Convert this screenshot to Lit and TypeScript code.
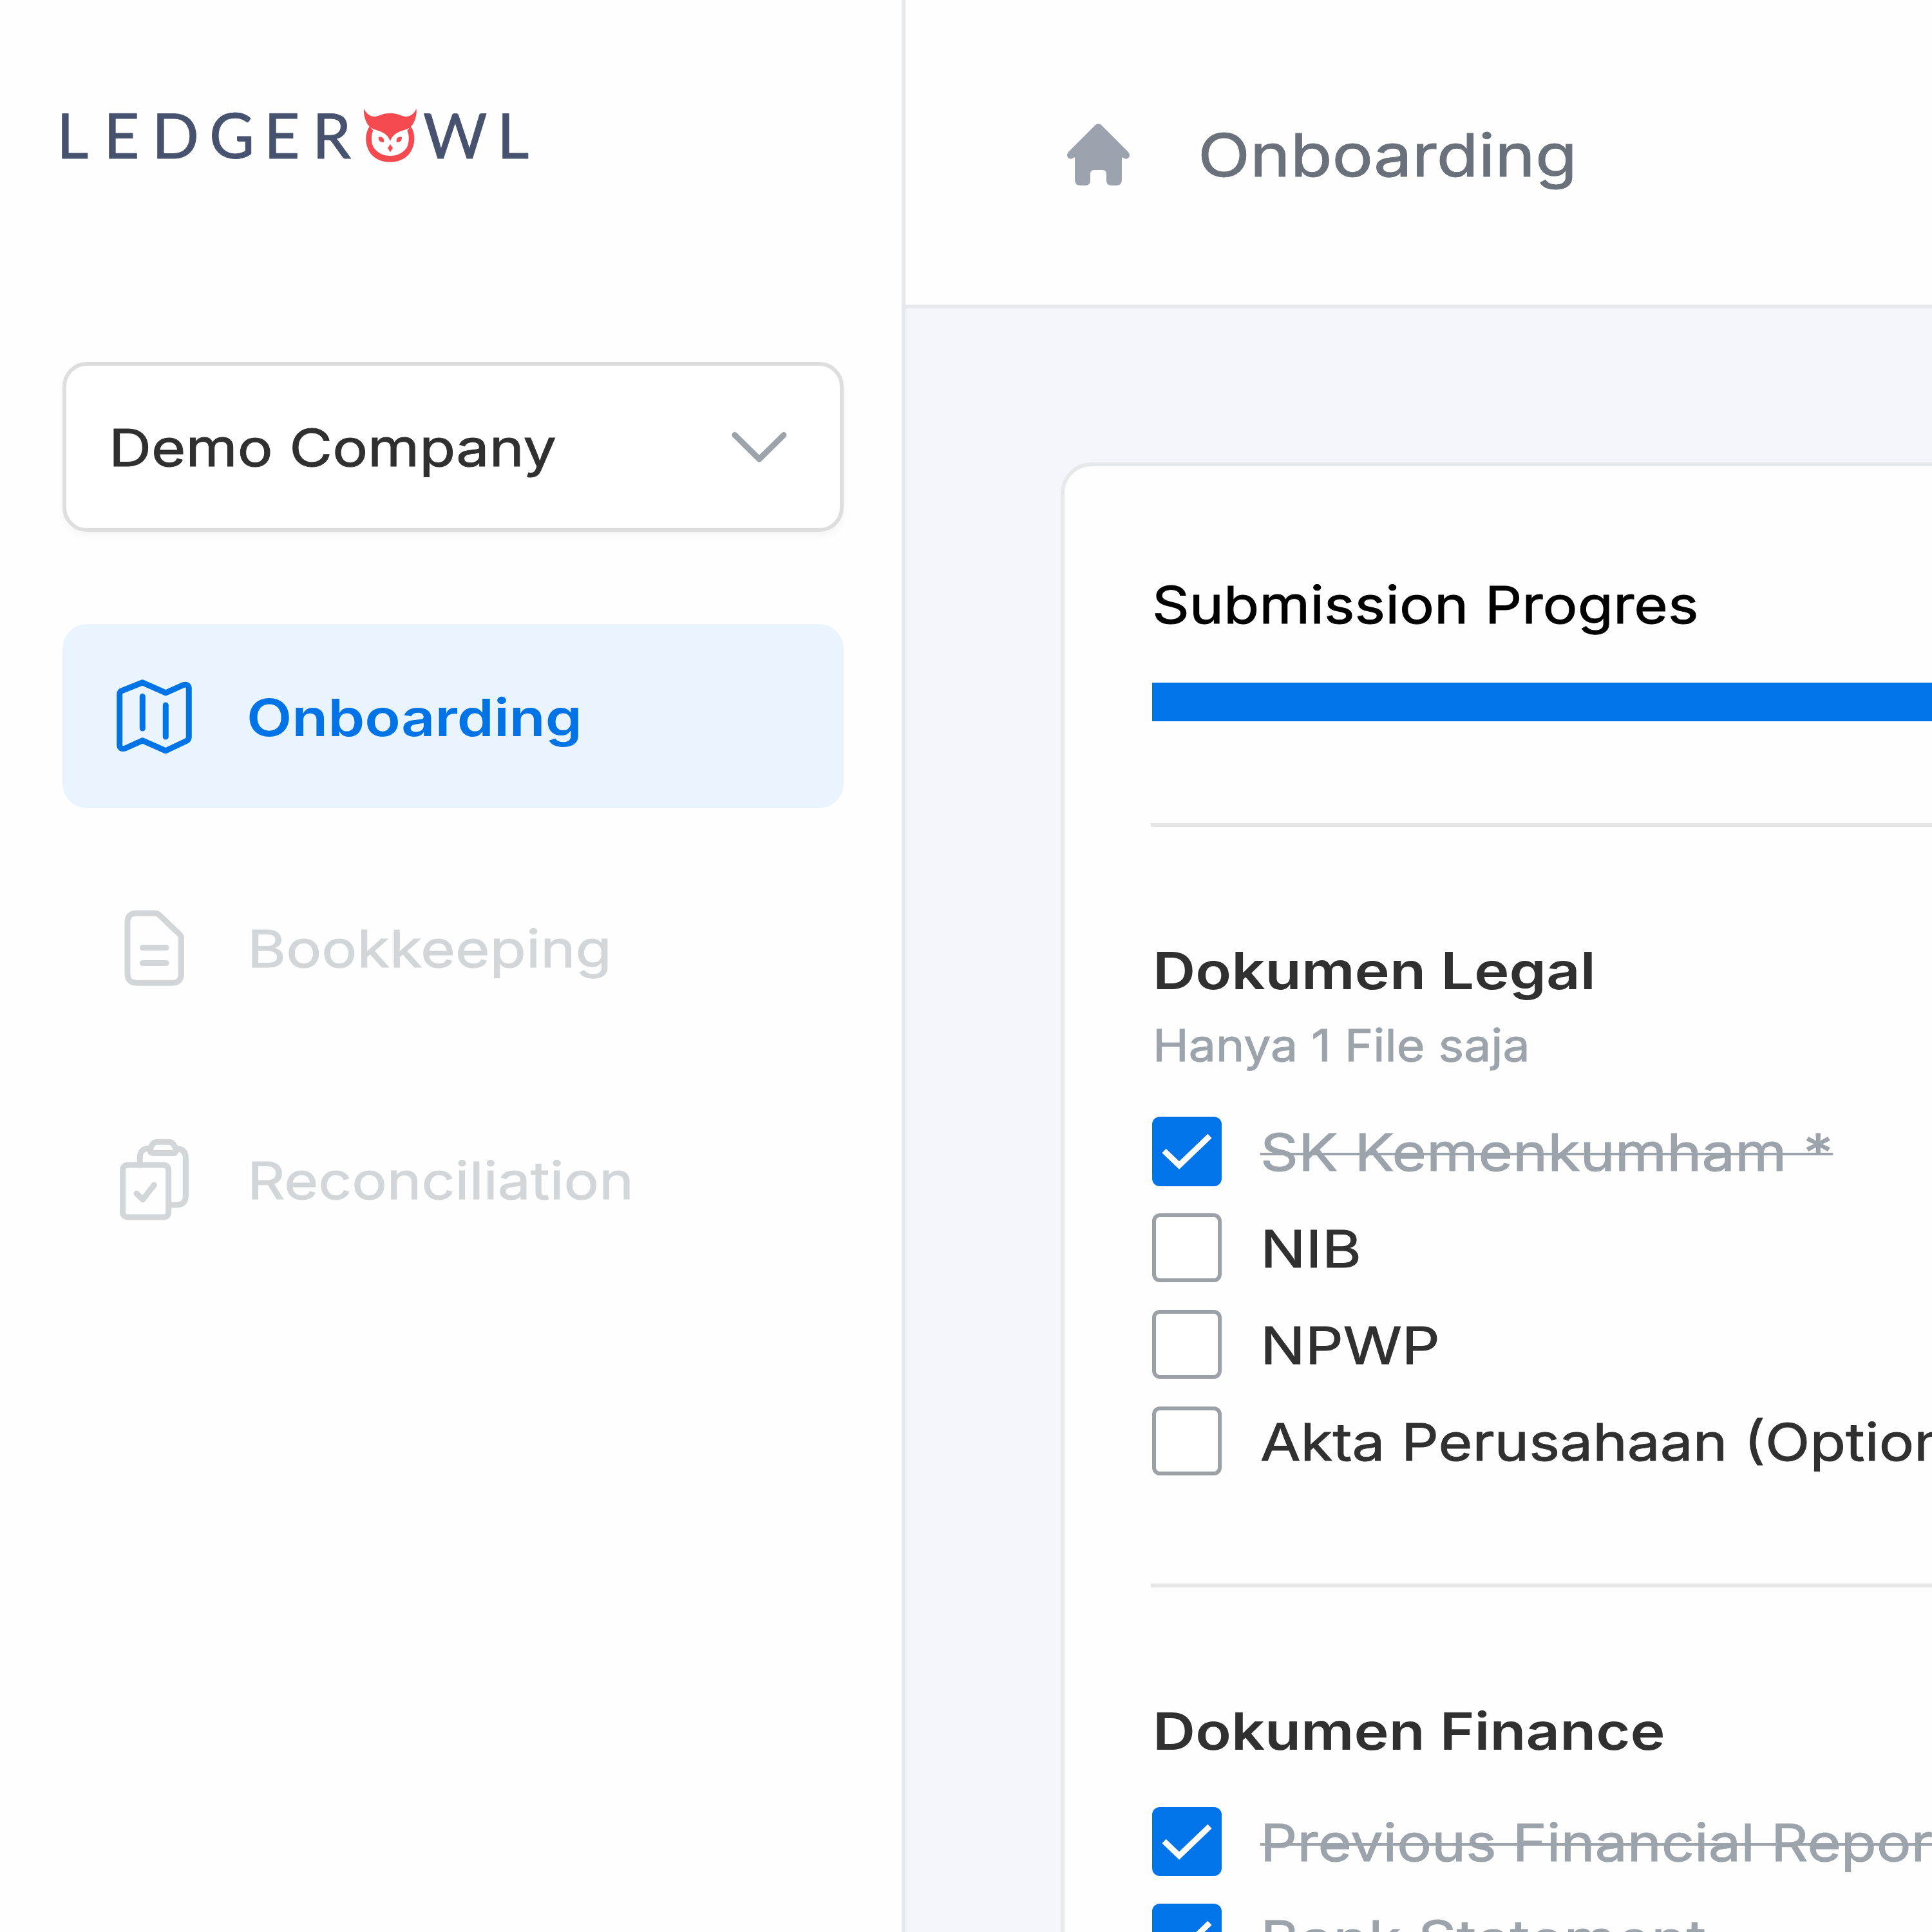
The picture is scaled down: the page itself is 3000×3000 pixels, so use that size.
import { LitElement, html, css, svg } from "lit";
import { customElement } from "lit/decorators.js";
import { classMap } from "lit/directives/class-map.js";
import { styleMap } from "lit/directives/style-map.js";

interface Label {
  text: string;
  /** horizontal stretch that gives Inter the wide set of the brand face */
  stretch: number;
}

interface Task extends Label {
  done: boolean;
}

interface NavItem extends Label {
  icon: unknown;
  active: boolean;
}

const mapIcon = svg`
  <path d="M5.700 26Q5.700 22 9.500 20.500L41.300 7.800L77.300 23.800L104 11.800Q113.300 9 113.300 18V92Q113.300 96.500 109.500 98.500L77.300 113.800L41.300 97.800L14.500 110Q5.700 112.500 5.700 104Z"/>
  <path d="M41.300 29.500V79M77.300 43V92"/>`;

const fileIcon = svg`
  <path d="M32 7H61Q64.500 7 67 9.500L98.500 39.500Q101.400 42.300 101.400 45.500V101Q101.400 115.200 87.400 115.200H32Q18 115.200 18 101V21Q18 7 32 7Z"/>
  <path d="M41.500 60.500H78M41.500 84.500H78"/>`;

const clipboardIcon = svg`
  <path d="M19 38H73Q81.700 38 81.700 46.500V110.500Q81.700 119 73 119H19Q10.600 119 10.600 110.500V46.500Q10.600 38 19 38Z"/>
  <path d="M37.300 38V26Q37.300 12.500 51 12.200M93 12.200Q108.300 13 108.300 27V86Q108.300 100 94 100H86"/>
  <path d="M65 2.300C58 2.300 55.500 6 53.500 13Q52 19.600 57.500 19.600H89Q94.500 19.600 92.800 13C90.500 6 88 2.300 81.500 2.300Z"/>
  <path d="M32 82.300L41.700 91.700L59.300 69"/>`;

const NAV: NavItem[] = [
  { text: "Onboarding", stretch: 1.138, icon: mapIcon, active: true },
  { text: "Bookkeeping", stretch: 1.144, icon: fileIcon, active: false },
  { text: "Reconciliation", stretch: 1.132, icon: clipboardIcon, active: false },
];

const LEGAL: Task[] = [
  { text: "SK Kemenkumham *", stretch: 1.142, done: true },
  { text: "NIB", stretch: 1.165, done: false },
  { text: "NPWP", stretch: 1.15, done: false },
  { text: "Akta Perusahaan (Optional)", stretch: 1.129, done: false },
];

const FINANCE: Task[] = [
  { text: "Previous Financial Report", stretch: 1.116, done: true },
  { text: "Bank Statement", stretch: 1.156, done: true },
];

const wide = (l: Label) =>
  html`<span class="wide" style=${styleMap({ "--stretch": String(l.stretch) })}>${l.text}</span>`;

@customElement("app-root")
export class AppRoot extends LitElement {
  static styles = css`
    :host {
      display: block;
      width: 3000px;
      height: 3000px;
      overflow: hidden;
      font-family: "Inter", "Liberation Sans", sans-serif;
      font-size: 80.4px;
      font-weight: 400;
      color: #303030;
      -webkit-text-stroke: 1px currentColor;
    }
    .app { display: flex; width: 3000px; height: 3000px; overflow: hidden; background: #fff; }
    .wide { display: inline-block; white-space: pre; transform: scaleX(var(--stretch)); transform-origin: 0 50%; }
    svg { display: block; flex: none; overflow: visible; }

    .sidebar {
      box-sizing: border-box; flex: none; width: 1406px; height: 100%;
      padding: 160px 90px 0 97px; border-right: 6px solid #e7e8eb;
      display: flex; flex-direction: column; background: #fefefe;
    }
    .logo-text {
      font-family: "Lato", sans-serif; font-size: 96px; font-weight: 400; fill: #46526e;
      -webkit-text-stroke: 0; stroke: #46526e; stroke-width: 1px; stroke-linejoin: round;
    }
    .owl { fill: #f44a50; }
    .select {
      box-sizing: border-box; margin-top: 302px; height: 264px; width: 1213px; padding: 0 83px 0 66px;
      display: flex; align-items: center; justify-content: space-between;
      border: 6px solid #dedede; border-radius: 38px; background: #fff;
      box-shadow: 0 6px 12px rgba(0, 0, 0, 0.04);
    }
    .chevron { fill: none; stroke: #9ca3ab; stroke-width: 9px; stroke-linecap: round; stroke-linejoin: round; margin-top: 2px; }
    .nav { display: flex; flex-direction: column; gap: 73px; margin-top: 143px; }
    .item {
      box-sizing: border-box; height: 286.300px; width: 1213px; padding-left: 83px;
      display: flex; align-items: center; gap: 84px; border-radius: 38px; color: #d3d6d9;
    }
    .item svg { fill: none; stroke: currentColor; stroke-width: 9px; stroke-linecap: round; stroke-linejoin: round; }
    .item span { line-height: 100px; margin-top: 4px; }
    .item.active { background: #eaf4fe; color: #0073e6; font-weight: 600; gap: 83px; -webkit-text-stroke: 0; }

    .page { flex: 1; min-width: 0; height: 100%; display: flex; flex-direction: column; overflow: hidden; }
    .topbar {
      box-sizing: border-box; flex: none; height: 478.500px; padding: 7px 0 0 251px;
      display: flex; align-items: center; gap: 106px; border-bottom: 6px solid #e7e8ec; background: #fefefe;
      font-size: 92.4px; color: #6a717b;
    }
    .home { fill: #9ca3af; }
    .canvas { flex: 1; min-height: 0; padding: 239.500px 0 0 241px; background: #f4f6fb; overflow: hidden; }
    .card {
      box-sizing: border-box; width: 1800px; height: 2600px; padding: 164.500px 0 0 136px;
      border: 6px solid #e7e8ea; border-radius: 48px; background: #fefefe;
      display: flex; flex-direction: column;
    }
    .title { line-height: 100px; color: #000; }
    .progress { margin-top: 71px; height: 60px; background: #0074e8; }
    .divider { flex: none; height: 6px; margin-left: -2px; background: #e6e6e6; }
    .divider.first { margin-top: 158px; }
    .divider.second { margin-top: 167.600px; }
    .heading { line-height: 100px; margin-top: 173px; font-weight: 600; -webkit-text-stroke: 0; }
    .heading .wide, .hint .wide { margin-left: 1px; }
    .hint { line-height: 90px; margin-top: 21px; font-size: 69.4px; color: #9ca3ab; }
    .tasks { display: flex; flex-direction: column; gap: 42.400px; margin-top: 66.500px; }
    .tasks.tight { margin-top: 68px; }
    .task { display: flex; align-items: center; gap: 61px; height: 107.500px; }
    .task .wide { line-height: 100px; margin-top: 3px; }
    .task.done .wide { color: #9ca3ab; text-decoration: line-through; text-decoration-thickness: 4px; }
    .box { box-sizing: border-box; flex: none; width: 108px; height: 107.500px; margin-right: -1px; border: 6px solid #9ca0a7; border-radius: 12px; background: #fff; }
    .done .box { border-color: #0074e8; background: #0074e8; }
    .tick { fill: none; stroke: #fff; stroke-width: 9px; }
  `;

  private logo() {
    return html`<svg width="740" height="100" viewBox="97 160 740 100">
      <text class="logo-text" y="246.300" x="88 161 236 325 410 485">LEDGER</text>
      <text class="logo-text" y="246.300" x="657 772">WL</text>
      <g class="owl" transform="translate(540 150) scale(.3333)">
        <path d="M75 57C87 80 107 95 128 93C150 90 160 77 198 77C236 77 246 90 268 93C289 95 309 80 320 57C323 92 308 134 286 146C262 161 216 158 198 207C180 158 134 161 110 146C88 134 72 92 75 57Z"/>
        <path d="M102 138C77 174 79 228 107 266C150 318 244 318 287 266C316 228 318 174 293 138L277 158C288 180 286 214 276 236C242 289 154 289 120 236C108 214 108 180 118 158Z"/>
        <path d="M143 188Q164 184 168 201V212Q142 215 143 188ZM252 188Q231 184 227 201V212Q253 215 252 188ZM198 222L210 240L198 259L186 240Z"/>
      </g>
    </svg>`;
  }

  private task(t: Task) {
    return html`<div class=${classMap({ task: true, done: t.done })}>
      <div class="box">
        ${t.done
          ? html`<svg width="96" height="96" viewBox="6 6 96 96"><path class="tick" d="M18.500 53L42 75.500L89.500 30"/></svg>`
          : null}
      </div>
      ${wide(t)}
    </div>`;
  }

  render() {
    return html`<div class="app">
      <aside class="sidebar">
        ${this.logo()}
        <div class="select">
          ${wide({ text: "Demo Company", stretch: 1.139 })}
          <svg class="chevron" width="84" height="48" viewBox="0 0 84 48"><path d="M4 4.500L42 42L80 4.500"/></svg>
        </div>
        <nav class="nav">
          ${NAV.map(
            (n) => html`<div class=${classMap({ item: true, active: n.active })}>
              <svg width="120" height="120" viewBox="0 0 120 120">${n.icon}</svg>
              ${wide(n)}
            </div>`
          )}
        </nav>
      </aside>
      <main class="page">
        <header class="topbar">
          <svg class="home" width="97" height="96" viewBox="0 0 97 96">
            <path d="M48.500 0Q51 0 53 2L94.500 43.500Q99 48.500 95.500 53Q91.500 56.500 86 52.500H85V87Q85 96 76 96H69Q61 96 61 88V78Q61 72 55 72H42Q36 72 36 78V88Q36 96 28 96H21Q12 96 12 87V52.500H11Q5.500 56.500 1.500 53Q-2 48.500 2.500 43.500L44 2Q46 0 48.500 0Z"/>
          </svg>
          ${wide({ text: "Onboarding", stretch: 1.147 })}
        </header>
        <div class="canvas">
          <section class="card">
            <div class="title">${wide({ text: "Submission Progres", stretch: 1.121 })}</div>
            <div class="progress"></div>
            <div class="divider first"></div>
            <div class="heading">${wide({ text: "Dokumen Legal", stretch: 1.143 })}</div>
            <div class="hint">${wide({ text: "Hanya 1 File saja", stretch: 1.082 })}</div>
            <div class="tasks">${LEGAL.map((t) => this.task(t))}</div>
            <div class="divider second"></div>
            <div class="heading">${wide({ text: "Dokumen Finance", stretch: 1.139 })}</div>
            <div class="tasks tight">${FINANCE.map((t) => this.task(t))}</div>
          </section>
        </div>
      </main>
    </div>`;
  }
}
